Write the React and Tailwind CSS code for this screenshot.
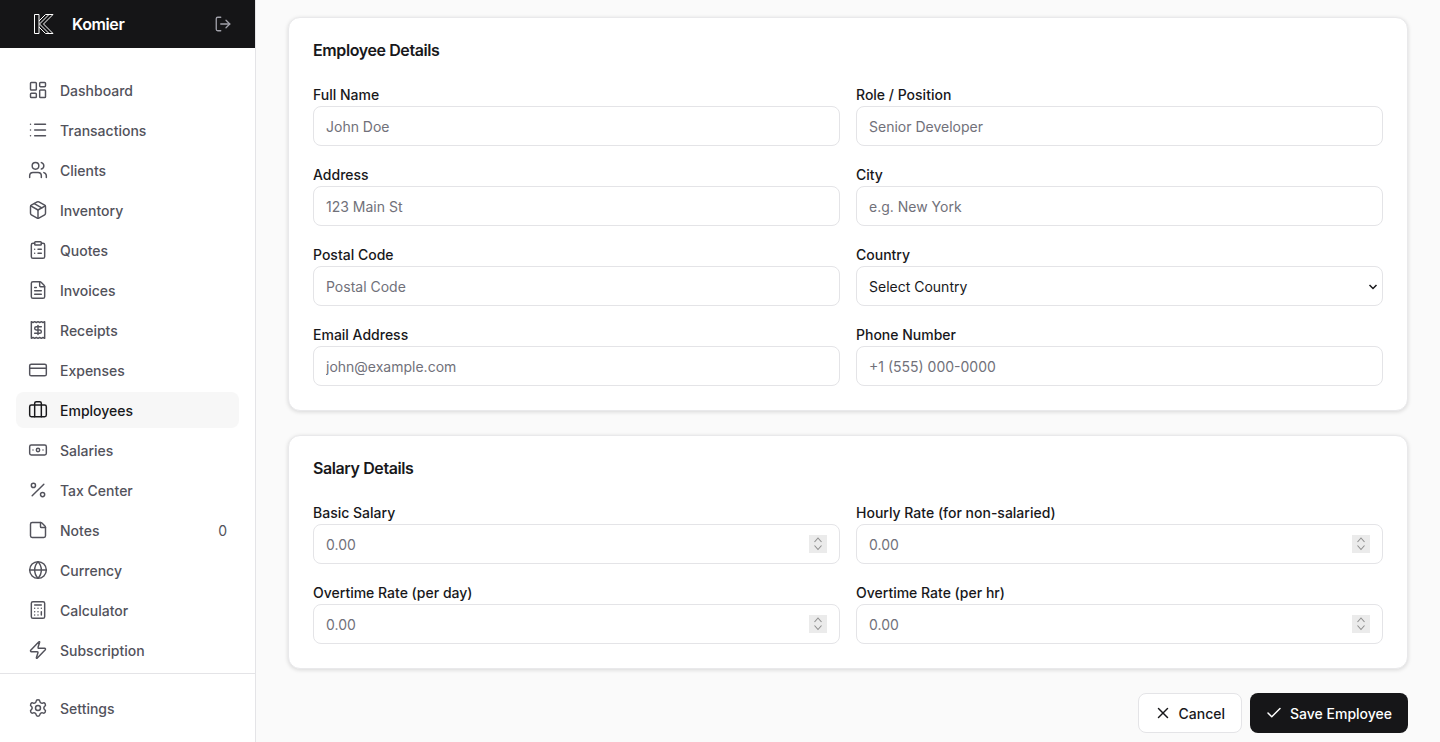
import {
  LayoutDashboard, List, Users, Package, ClipboardList, FileText, Receipt, CreditCard, Briefcase,
  Banknote, Percent, StickyNote, Globe, Calculator, Zap, Settings, LogOut, X, Check,
} from 'lucide-react';

const NAV = [
  { label: 'Dashboard', icon: LayoutDashboard },
  { label: 'Transactions', icon: List },
  { label: 'Clients', icon: Users },
  { label: 'Inventory', icon: Package },
  { label: 'Quotes', icon: ClipboardList },
  { label: 'Invoices', icon: FileText },
  { label: 'Receipts', icon: Receipt },
  { label: 'Expenses', icon: CreditCard },
  { label: 'Employees', icon: Briefcase, active: true },
  { label: 'Salaries', icon: Banknote },
  { label: 'Tax Center', icon: Percent },
  { label: 'Notes', icon: StickyNote, count: 0 },
  { label: 'Currency', icon: Globe },
  { label: 'Calculator', icon: Calculator },
  { label: 'Subscription', icon: Zap },
];

function NavItem({ label, icon: Icon, active, count }) {
  return (
    <a
      className={
        active
          ? 'flex items-center h-9 px-3 gap-3 rounded-lg text-sm font-medium text-[#18181b] bg-[#f7f7f7] bg-[radial-gradient(#efefef_0.6px,transparent_0.6px)] bg-[size:4px_4px] bg-[position:0.5px_0.5px]'
          : 'flex items-center h-9 px-3 gap-3 rounded-lg text-sm font-medium text-[#52525b]'
      }
    >
      <Icon size={20} strokeWidth={1.75} />
      <span className="flex-1 pt-[2px]">{label}</span>
      {count !== undefined && <span className="pt-[2px] font-normal">{count}</span>}
    </a>
  );
}

function Label({ children }) {
  return <span className="pt-[2px] text-sm font-medium leading-[18px] text-[#18181b]">{children}</span>;
}

function Field({ label, placeholder }) {
  return (
    <label className="flex flex-col gap-0.5">
      <Label>{label}</Label>
      <input
        type="text"
        placeholder={placeholder}
        className="h-10 w-full px-3 rounded-lg border border-[#e4e4e7] bg-white text-sm outline-none placeholder:text-[#71717a]"
      />
    </label>
  );
}

// the stepper is drawn over the input, the native one looks different here
function NumberField({ label }) {
  return (
    <label className="flex flex-col gap-0.5">
      <Label>{label}</Label>
      <div className="relative">
        <input
          type="number"
          placeholder="0.00"
          className="h-10 w-full px-3 rounded-lg border border-[#e4e4e7] bg-white text-sm outline-none placeholder:text-[#71717a] [appearance:textfield] [&::-webkit-inner-spin-button]:appearance-none"
        />
        <span className="absolute right-[13px] top-[11px] w-[18px] h-[18px] bg-[#ebebeb]">
          <svg width="18" height="18" viewBox="0 0 18 18" fill="none" stroke="#8f8f8f" strokeWidth="1.1">
            <path d="M5.500 7 9 3l3.500 4" />
            <path d="M5.500 10.500 9 14.500l3.500-4" />
          </svg>
        </span>
      </div>
    </label>
  );
}

function Card({ title, children }) {
  return (
    <section className="bg-white rounded-xl border border-[#e9e9eb] shadow-[0_1px_4px_rgba(0,0,0,0.14)] p-6">
      <h2 className="text-base font-semibold leading-4 tracking-tight text-[#18181b] mb-[26px]">{title}</h2>
      <div className="grid grid-cols-2 gap-x-4 gap-y-[18px]">{children}</div>
    </section>
  );
}

export default function App() {
  return (
    <div className="flex h-[742px] overflow-hidden bg-[#fafafa] font-['Inter',sans-serif]">
      <aside className="flex flex-col w-[256px] shrink-0 bg-white border-r border-[#e4e4e7]">
        <div className="flex items-center h-12 pl-[33px] pr-[23px] bg-[#151517] bg-[radial-gradient(#2e2e30_0.6px,transparent_0.6px)] bg-[size:4px_4px] bg-[position:0.5px_0.5px]">
          <svg width="22" height="22" viewBox="0 0 22 22" fill="none" stroke="white" strokeWidth="1">
            <path d="M1.500 1.500h4.500v19h-4.500z" />
            <path d="M6 8 12.500 1.500h3.500L6.500 11l9.500 9.500h-3.500L6 14" />
            <path d="M16 1.500h4L10.500 11l9.500 9.500h-4" />
          </svg>
          <span className="ml-[17px] text-base font-semibold tracking-tight text-white flex-1">Komier</span>
          <LogOut size={18} strokeWidth={1.75} className="text-[#a1a1aa]" />
        </div>
        <nav className="flex-1 flex flex-col gap-1 px-4 pt-6">
          {NAV.map((item) => (
            <NavItem key={item.label} {...item} />
          ))}
        </nav>
        <div className="border-t border-[#e4e4e7] p-4">
          <NavItem label="Settings" icon={Settings} />
        </div>
      </aside>

      <main className="flex-1 flex flex-col gap-6 px-8 pt-[17px]">
        <Card title="Employee Details">
          <Field label="Full Name" placeholder="John Doe" />
          <Field label="Role / Position" placeholder="Senior Developer" />
          <Field label="Address" placeholder="123 Main St" />
          <Field label="City" placeholder="e.g. New York" />
          <Field label="Postal Code" placeholder="Postal Code" />
          <label className="flex flex-col gap-0.5">
            <Label>Country</Label>
            <div className="relative">
              <select className="h-10 w-full px-3 pt-[2px] rounded-lg border border-[#e4e4e7] bg-white text-sm text-[#18181b] outline-none appearance-none">
                <option>Select Country</option>
              </select>
              <svg className="absolute right-[5px] top-[18px] pointer-events-none" width="10" height="6" viewBox="0 0 10 6" fill="none" stroke="#18181b" strokeWidth="1.5">
                <path d="M1.500 1 5 4.500 8.500 1" />
              </svg>
            </div>
          </label>
          <Field label="Email Address" placeholder="john@example.com" />
          <Field label="Phone Number" placeholder="+1 (555) 000-0000" />
        </Card>
        <Card title="Salary Details">
          <NumberField label="Basic Salary" />
          <NumberField label="Hourly Rate (for non-salaried)" />
          <NumberField label="Overtime Rate (per day)" />
          <NumberField label="Overtime Rate (per hr)" />
        </Card>
        <div className="flex justify-end gap-2">
          <button className="flex items-center gap-[7px] h-10 pl-[15px] pr-4 rounded-lg border border-[#e4e4e7] bg-white text-sm font-medium text-[#18181b]">
            <X size={18} strokeWidth={2} />
            <span className="pt-[2px]">Cancel</span>
          </button>
          <button className="flex items-center gap-[7px] h-10 pl-[15px] pr-4 rounded-lg bg-[#161618] bg-[radial-gradient(#2e2e30_0.6px,transparent_0.6px)] bg-[size:4px_4px] bg-[position:0.5px_0.5px] text-sm font-medium text-white">
            <Check size={18} strokeWidth={2} />
            <span className="pt-[2px]">Save Employee</span>
          </button>
        </div>
      </main>
    </div>
  );
}
